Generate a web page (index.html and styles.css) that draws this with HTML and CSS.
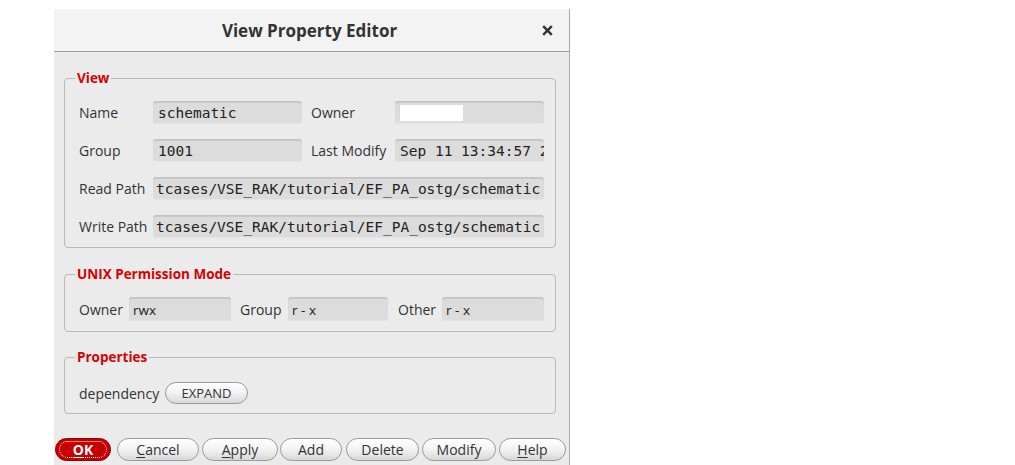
FILE: index.html
```html
<!DOCTYPE html>
<html>
<head>
<meta charset="utf-8">
<title>View Property Editor</title>
<link rel="stylesheet" href="styles.css">
</head>
<body>
<div class="dialog">
  <div class="titlebar">
    <span class="title">View Property Editor</span>
    <svg class="close" width="11" height="11" viewBox="0 0 11 11" aria-label="Close">
      <path d="M1.2 1.2 L9.8 9.8 M9.8 1.2 L1.2 9.8" stroke="#333333" stroke-width="2.4" stroke-linecap="butt" fill="none"/>
    </svg>
  </div>
  <div class="content">
    <fieldset class="group view">
      <legend>View</legend>
      <div class="view-grid">
        <span class="lbl">Name</span>
        <div class="field mono">schematic</div>
        <span class="lbl l2">Owner</span>
        <div class="field"><span class="blank"></span></div>

        <span class="lbl">Group</span>
        <div class="field mono">1001</div>
        <span class="lbl l2">Last Modify</span>
        <div class="field mono">Sep 11 13:34:57 2018</div>

        <span class="lbl">Read Path</span>
        <div class="field mono span3 tight">tcases/VSE_RAK/tutorial/EF_PA_ostg/schematic</div>

        <span class="lbl">Write Path</span>
        <div class="field mono span3 tight">tcases/VSE_RAK/tutorial/EF_PA_ostg/schematic</div>
      </div>
    </fieldset>

    <fieldset class="group unix">
      <legend>UNIX Permission Mode</legend>
      <div class="perm-row">
        <span class="lbl p-owner">Owner</span>
        <div class="field perm w102">rwx</div>
        <span class="lbl p-group">Group</span>
        <div class="field perm w100">r - x</div>
        <span class="lbl p-other">Other</span>
        <div class="field perm w102">r - x</div>
      </div>
    </fieldset>

    <fieldset class="group props">
      <legend>Properties</legend>
      <div class="prop-row">
        <span class="lbl">dependency</span>
        <button class="btn expand">EXPAND</button>
      </div>
    </fieldset>
  </div>
  <div class="buttons">
    <button class="btn ok"><span class="focus"><u>O</u>K</span></button>
    <button class="btn b-cancel"><u>C</u>ancel</button>
    <button class="btn b-apply"><u>A</u>pply</button>
    <button class="btn b-add">Add</button>
    <button class="btn b-delete">Delete</button>
    <button class="btn b-modify">Modify</button>
    <button class="btn b-help"><u>H</u>elp</button>
  </div>
</div>
</body>
</html>
```

FILE: styles.css
```css
html, body {
  margin: 0;
  padding: 0;
  background: #ffffff;
}

body {
  font-family: "Open Sans", "DejaVu Sans", sans-serif;
  color: #333333;
}

.dialog {
  margin-left: 54px;
  margin-top: 9px;
  width: 515px;
  height: 456px;
  background: #ebebeb;
  border-right: 1px solid #a9a9a9;
  display: flex;
  flex-direction: column;
}

.titlebar {
  height: 42px;
  flex: none;
  background: #f3f3f3;
  border-bottom: 1px solid #9e9e9e;
  display: flex;
  align-items: center;
  justify-content: center;
  position: relative;
}

.title {
  font-weight: 700;
  font-size: 17px;
  color: #333333;
  margin-left: -4px;
}

.close {
  position: absolute;
  right: 16px;
  top: 16px;
}

.content {
  padding: 18px 13px 0 10px;
  display: flex;
  flex-direction: column;
}

.group {
  margin: 0;
  border: 1px solid #b9b9b9;
  border-radius: 4px;
  padding: 15px 11px 9px 14px;
  min-inline-size: 0;
}

.group legend {
  font-weight: 700;
  font-size: 13.5px;
  line-height: 16px;
  color: #d60000;
  padding: 0 2px;
  margin-left: -4px;
}

.unix {
  margin-top: 18px;
  padding-bottom: 10px;
}

.props {
  margin-top: 17px;
  padding-top: 17px;
  padding-bottom: 9px;
}

.lbl {
  font-size: 14px;
  color: #333333;
  white-space: nowrap;
}

.view-grid {
  display: grid;
  grid-template-columns: 74px 149px 93px 149px;
  grid-auto-rows: 23px;
  row-gap: 15px;
  align-items: center;
}

.l2 {
  padding-left: 9px;
}

.field {
  height: 23px;
  box-sizing: border-box;
  background: #dcdcdc;
  border-radius: 3px;
  border-top: 1px solid #c2c2c2;
  box-shadow: inset 0 1px 1px #c8c8c8, inset 0 -1px 0 #e4e4e4;
  padding: 0 5px;
  display: flex;
  align-items: center;
  overflow: hidden;
  white-space: nowrap;
  color: #222222;
}

.mono {
  font-family: "DejaVu Sans Mono", "Liberation Mono", monospace;
  font-size: 14.5px;
}

.span3 {
  grid-column: 2 / 5;
}

.tight {
  padding-left: 3px;
}

.blank {
  width: 63px;
  height: 16px;
  background: #ffffff;
}

.perm-row {
  display: flex;
  align-items: center;
  height: 24px;
}

.perm {
  height: 24px;
  font-size: 13.5px;
  padding-left: 4px;
}

.w102 { width: 102px; flex: none; }
.w100 { width: 100px; flex: none; }

.p-owner { width: 50px; }
.p-group { width: 48px; margin-left: 9px; }
.p-other { width: 44px; margin-left: 10px; }

.prop-row {
  display: flex;
  align-items: center;
  height: 22px;
}

.prop-row .lbl {
  width: 86px;
}

.btn {
  font-family: "Open Sans", "DejaVu Sans", sans-serif;
  font-size: 14px;
  color: #333333;
  height: 23px;
  box-sizing: border-box;
  border: 1px solid #9a9a9a;
  border-radius: 12px;
  background: linear-gradient(#ffffff 0%, #f4f4f4 45%, #d8d8d8 100%);
  padding: 0;
  display: flex;
  align-items: center;
  justify-content: center;
  line-height: 1;
  flex: none;
}

.expand {
  width: 83px;
  height: 22px;
  font-size: 13px;
  border-radius: 11px;
}

.buttons {
  display: flex;
  margin-top: 24px;
  padding-left: 1px;
}

.btn u {
  text-decoration-thickness: 1px;
  text-underline-offset: 2px;
}

.ok {
  width: 56px;
  background: #c80000;
  border-color: #8f0000;
  color: #ffffff;
  font-weight: 700;
  padding: 2px 3px;
}

.ok .focus {
  flex: 1;
  align-self: stretch;
  border: 1px dotted #ffffff;
  border-radius: 9px;
  display: flex;
  align-items: center;
  justify-content: center;
}

.b-cancel { width: 82px; margin-left: 6px; }
.b-apply  { width: 76px; margin-left: 3px; }
.b-add    { width: 62px; margin-left: 2px; }
.b-delete { width: 73px; margin-left: 4px; }
.b-modify { width: 74px; margin-left: 3px; }
.b-help   { width: 67px; margin-left: 3px; }
```
